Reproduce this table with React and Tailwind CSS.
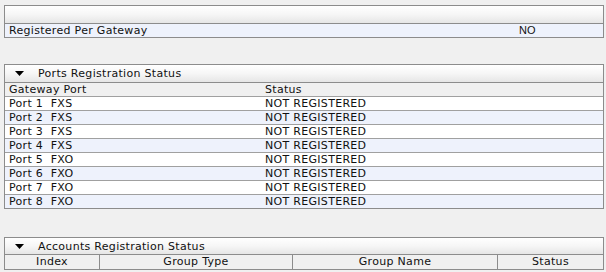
import React from "react";

const ports = [
    ["Port 1", "FXS"],
    ["Port 2", "FXS"],
    ["Port 3", "FXS"],
    ["Port 4", "FXS"],
    ["Port 5", "FXO"],
    ["Port 6", "FXO"],
    ["Port 7", "FXO"],
    ["Port 8", "FXO"],
];

const Caret = () => (
    <svg width="9" height="5" viewBox="0 0 9 5" className="mr-[14px]">
        <path d="M0 0 L9 0 L4.5 5 Z" fill="#000" />
    </svg>
);

const PanelHeader = ({ title, tall = true }) => (
    <div
        className={`${tall ? "h-[18px]" : "h-[17px]"} flex items-center pl-[10px] border-b border-[#8c8c8c] bg-gradient-to-b from-white via-[#f6f6f6] to-[#e6e6e6]`}
    >
        {title && <Caret />}
        {title}
    </div>
);

const App = () => {
    return (
        <div
            className="min-h-screen bg-[#f0f0f0] pt-[5px] text-[11px] leading-[13px] tracking-[0.3px] text-[#111]"
            style={{ fontFamily: '"DejaVu Sans", Verdana, sans-serif' }}
        >
            {/* Gateway registration */}
            <div className="ml-[4px] w-[600px] border border-[#8c8c8c]">
                <PanelHeader />
                <div className="h-[13px] flex bg-[#eef2fc]">
                    <div className="w-[514px] pl-[4px]">Registered Per Gateway</div>
                    <div
                        className="tracking-normal"
                        style={{ fontFamily: '"Liberation Sans", Arial, sans-serif' }}
                    >
                        NO
                    </div>
                </div>
            </div>

            {/* Ports Registration Status */}
            <div className="ml-[4px] mt-[26px] w-[600px] border border-[#8c8c8c]">
                <PanelHeader title="Ports Registration Status" />
                <div className="h-[14px] flex bg-[#f0f0f0] border-b border-[#a0a0a0]">
                    <div className="w-[256px] pl-[4px]">Gateway Port</div>
                    <div className="pl-[4px]">Status</div>
                </div>
                {ports.map(([port, type], i) => (
                    <div
                        key={port}
                        className={`flex ${i % 2 ? "bg-[#eef2fc]" : "bg-white"} ${i < ports.length - 1 ? "h-[14px] border-b border-[#a0a0a0]" : "h-[13px]"}`}
                    >
                        <div className="w-[256px] pl-[4px] whitespace-pre">{port}  {type}</div>
                        <div className="pl-[4px]">NOT REGISTERED</div>
                    </div>
                ))}
            </div>

            {/* Accounts Registration Status */}
            <div className="ml-[4px] mt-[28px] w-[600px] border border-[#8c8c8c]">
                <PanelHeader title="Accounts Registration Status" tall={false} />
                <div className="h-[14px] flex bg-[#f0f0f0] text-center">
                    <div className="w-[95px] border-r border-[#8c8c8c]">Index</div>
                    <div className="w-[193px] border-r border-[#8c8c8c]">Group Type</div>
                    <div className="w-[205px] border-r border-[#8c8c8c]">Group Name</div>
                    <div className="flex-1">Status</div>
                </div>
            </div>
        </div>
    );
};

export default App;
